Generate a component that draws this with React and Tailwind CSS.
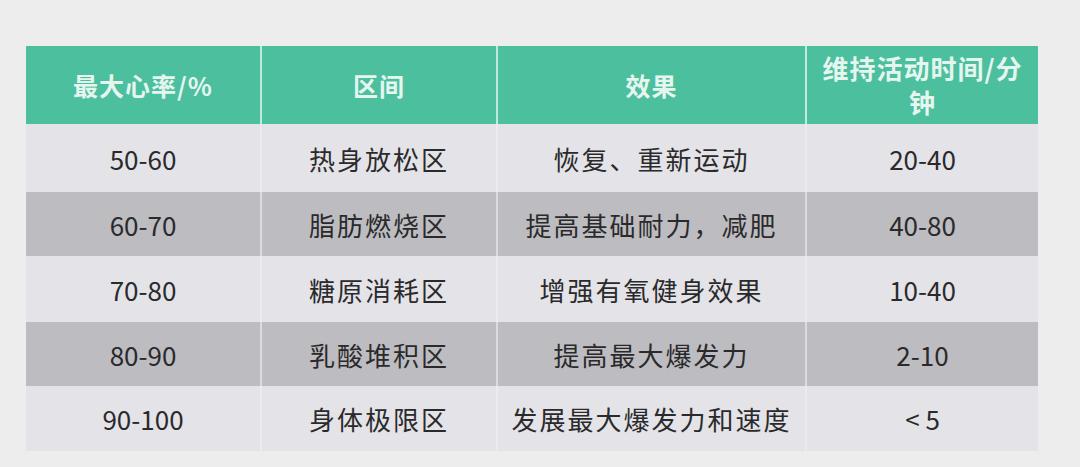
import React from "react";

const COLS = ["w-[234px]", "w-[236px]", "w-[309px]", "w-[233px]"];

const ROWS = [
  { cells: ["50-60", "热身放松区", "恢复、重新运动", "20-40"], h: "h-[68px]", dark: false },
  { cells: ["60-70", "脂肪燃烧区", "提高基础耐力，减肥", "40-80"], h: "h-[64px]", dark: true },
  { cells: ["70-80", "糖原消耗区", "增强有氧健身效果", "10-40"], h: "h-[66px]", dark: false },
  { cells: ["80-90", "乳酸堆积区", "提高最大爆发力", "2-10"], h: "h-[64px]", dark: true },
  { cells: ["90-100", "身体极限区", "发展最大爆发力和速度", "< 5"], h: "h-[65px]", dark: false },
];

const font = { fontFamily: '"Noto Sans CJK SC", "Noto Sans", sans-serif' };

export default function App() {
  return (
    <div className="w-[1080px] h-[467px] bg-[#ededee] pt-[46px] pl-[26px]" style={font}>
      <div className="w-[1012px] flex flex-col">
        <div className="flex h-[78px] bg-[#4cbf9f]">
          {["最大心率/%", "区间", "效果"].map((t, i) => (
            <div key={t} className={`${COLS[i]} flex items-center justify-center text-[25px] font-semibold text-[#e6f6ef] tracking-[1px] pt-[2px] ${i ? "border-l-2 border-[#bfe9da]" : ""}`}>
              {t}
            </div>
          ))}
          <div className={`${COLS[3]} flex flex-col items-center justify-center text-[26px] leading-[34px] font-semibold text-[#e6f6ef] tracking-[1px] border-l-2 border-[#bfe9da]`}>
            <span>维持活动时间/分</span>
            <span>钟</span>
          </div>
        </div>
        {ROWS.map((r, ri) => (
          <div key={ri} className={`flex ${r.h} ${r.dark ? "bg-[#bdbcc0]" : "bg-[#e4e3e8]"}`}>
            {r.cells.map((c, i) => (
              <div key={i} className={`${COLS[i]} flex items-center justify-center text-[#2a2a2c] ${i === 1 || i === 2 ? "text-[26px] tracking-[2px]" : "text-[26px] tracking-[0px]"} ${i ? (r.dark ? "border-l-2 border-[#dcdbe0]" : "border-l-2 border-[#ebeaee]") : ""}`}>
                {c}
              </div>
            ))}
          </div>
        ))}
      </div>
    </div>
  );
}
